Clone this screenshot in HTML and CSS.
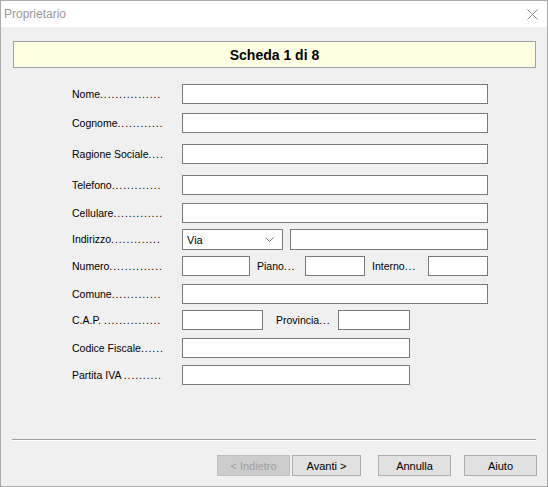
FILE: index.html
```html
<!DOCTYPE html>
<html lang="it">
<head>
    <meta charset="UTF-8">
    <meta name="viewport" content="width=device-width, initial-scale=1.0">
    <title>Proprietario</title>
    <link rel="stylesheet" href="styles.css">
</head>
<body>

<div class="window">
    <!-- Title bar -->
    <div class="titlebar">
        <span class="title">Proprietario</span>
        <svg class="close" width="11" height="11" viewBox="0 0 11 11">
            <path d="M0.5 0.5 L10.5 10.5 M10.5 0.5 L0.5 10.5" stroke="#8c8c8c" stroke-width="1" fill="none"/>
        </svg>
    </div>

    <div class="dialog">
        <div class="step-header">Scheda 1 di 8</div>

        <!-- Fields -->
        <div class="fields">
            <label class="field-label">Nome<span class="dots">................</span></label>
            <input type="text" class="input full">

            <label class="field-label">Cognome<span class="dots">............</span></label>
            <input type="text" class="input full">

            <label class="field-label">Ragione Sociale<span class="dots">....</span></label>
            <input type="text" class="input full">

            <label class="field-label">Telefono<span class="dots">.............</span></label>
            <input type="text" class="input full">

            <label class="field-label">Cellulare<span class="dots">.............</span></label>
            <input type="text" class="input full">

            <label class="field-label">Indirizzo<span class="dots">.............</span></label>
            <div class="field-row">
                <div class="combo">
                    <span>Via</span>
                    <svg width="9" height="5" viewBox="0 0 9 5">
                        <path d="M0.5 0.5 L4.5 4.5 L8.5 0.5" stroke="#777" stroke-width="1" fill="none"/>
                    </svg>
                </div>
                <input type="text" class="input street">
            </div>

            <label class="field-label">Numero<span class="dots">..............</span></label>
            <div class="field-row">
                <input type="text" class="input number">
                <label class="inline-label piano">Piano<span class="dots">...</span></label>
                <input type="text" class="input small">
                <label class="inline-label interno">Interno<span class="dots">...</span></label>
                <input type="text" class="input small">
            </div>

            <label class="field-label">Comune<span class="dots">.............</span></label>
            <input type="text" class="input full">

            <label class="field-label">C.A.P. <span class="dots">...............</span></label>
            <div class="field-row">
                <input type="text" class="input cap">
                <label class="inline-label provincia">Provincia<span class="dots">...</span></label>
                <input type="text" class="input prov">
            </div>

            <label class="field-label">Codice Fiscale<span class="dots">......</span></label>
            <input type="text" class="input half">

            <label class="field-label">Partita IVA <span class="dots">..........</span></label>
            <input type="text" class="input half">
        </div>

        <!-- Wizard buttons -->
        <div class="separator"></div>
        <div class="buttons">
            <button class="btn" disabled>&lt; Indietro</button>
            <button class="btn next">Avanti &gt;</button>
            <button class="btn cancel">Annulla</button>
            <button class="btn help">Aiuto</button>
        </div>
    </div>
</div>

</body>
</html>
```

FILE: styles.css
```css
* {
    margin: 0;
    padding: 0;
    box-sizing: border-box;
}

body {
    font-family: 'Liberation Sans', Arial, sans-serif;
    font-size: 11px;
    color: #000;
    background: #fff;
}

.window {
    width: 548px;
    height: 487px;
    border: 1px solid #aaaaaa;
    display: flex;
    flex-direction: column;
}

.titlebar {
    height: 26px;
    background: #fff;
    display: flex;
    align-items: center;
    justify-content: space-between;
    padding: 0 9px 0 3px;
}

.title {
    font-size: 12px;
    color: #999;
}

.dialog {
    flex: 1;
    background: #f0f0f0;
    display: flex;
    flex-direction: column;
    padding: 14px 0 10px 0;
}

.step-header {
    margin: 0 11px 0 12px;
    height: 27px;
    background: #ffffe1;
    border: 1px solid #a0a0a0;
    font-size: 14px;
    font-weight: bold;
    display: flex;
    align-items: center;
    justify-content: center;
}

.fields {
    margin: 16px 0 0 71px;
    display: grid;
    grid-template-columns: 110px auto;
    grid-template-rows: 29px 31px 31px 28px 26px 27px 28px 26px 28px 27px 20px;
    justify-items: start;
}

.field-label,
.inline-label {
    display: block;
    height: 20px;
    line-height: 20px;
    white-space: pre;
    font-size: 10.5px;
}

/* leader dots are wider on the original dialog font */
.dots {
    letter-spacing: 0.9px;
}

.field-row {
    display: flex;
    align-items: flex-start;
}

.input {
    height: 20px;
    border: 1px solid #7a7a7a;
    background: #fff;
    font: inherit;
    outline: none;
}

.input.full { width: 306px; }
.input.half { width: 228px; }
.input.street { width: 198px; margin-left: 7px; height: 21px; }
.input.number { width: 68px; }
.input.small { width: 60px; }
.input.cap { width: 81px; }
.input.prov { width: 72px; }

.combo {
    width: 101px;
    height: 21px;
    border: 1px solid #7a7a7a;
    background: #fff;
    display: flex;
    align-items: center;
    justify-content: space-between;
    padding: 0 8px 0 4px;
}

.inline-label.piano { width: 55px; padding-left: 7px; }
.inline-label.interno { width: 63px; padding-left: 7px; }
.inline-label.provincia { width: 75px; padding-left: 13px; }

.separator {
    margin: auto 11px 0 11px;
    border-top: 1px solid #a0a0a0;
    border-bottom: 1px solid #fff;
}

.buttons {
    margin: 14px 10px 0 0;
    display: flex;
    justify-content: flex-end;
}

.btn {
    width: 73px;
    height: 21px;
    border: 1px solid #adadad;
    background: #e1e1e1;
    font: inherit;
    color: #000;
}

.btn:disabled {
    background: #cccccc;
    border-color: #bfbfbf;
    color: #a0a0a0;
}

.btn.next { margin-left: 2px; width: 69px; }
.btn.cancel { margin-left: 17px; }
.btn.help { margin-left: 13px; }
```
